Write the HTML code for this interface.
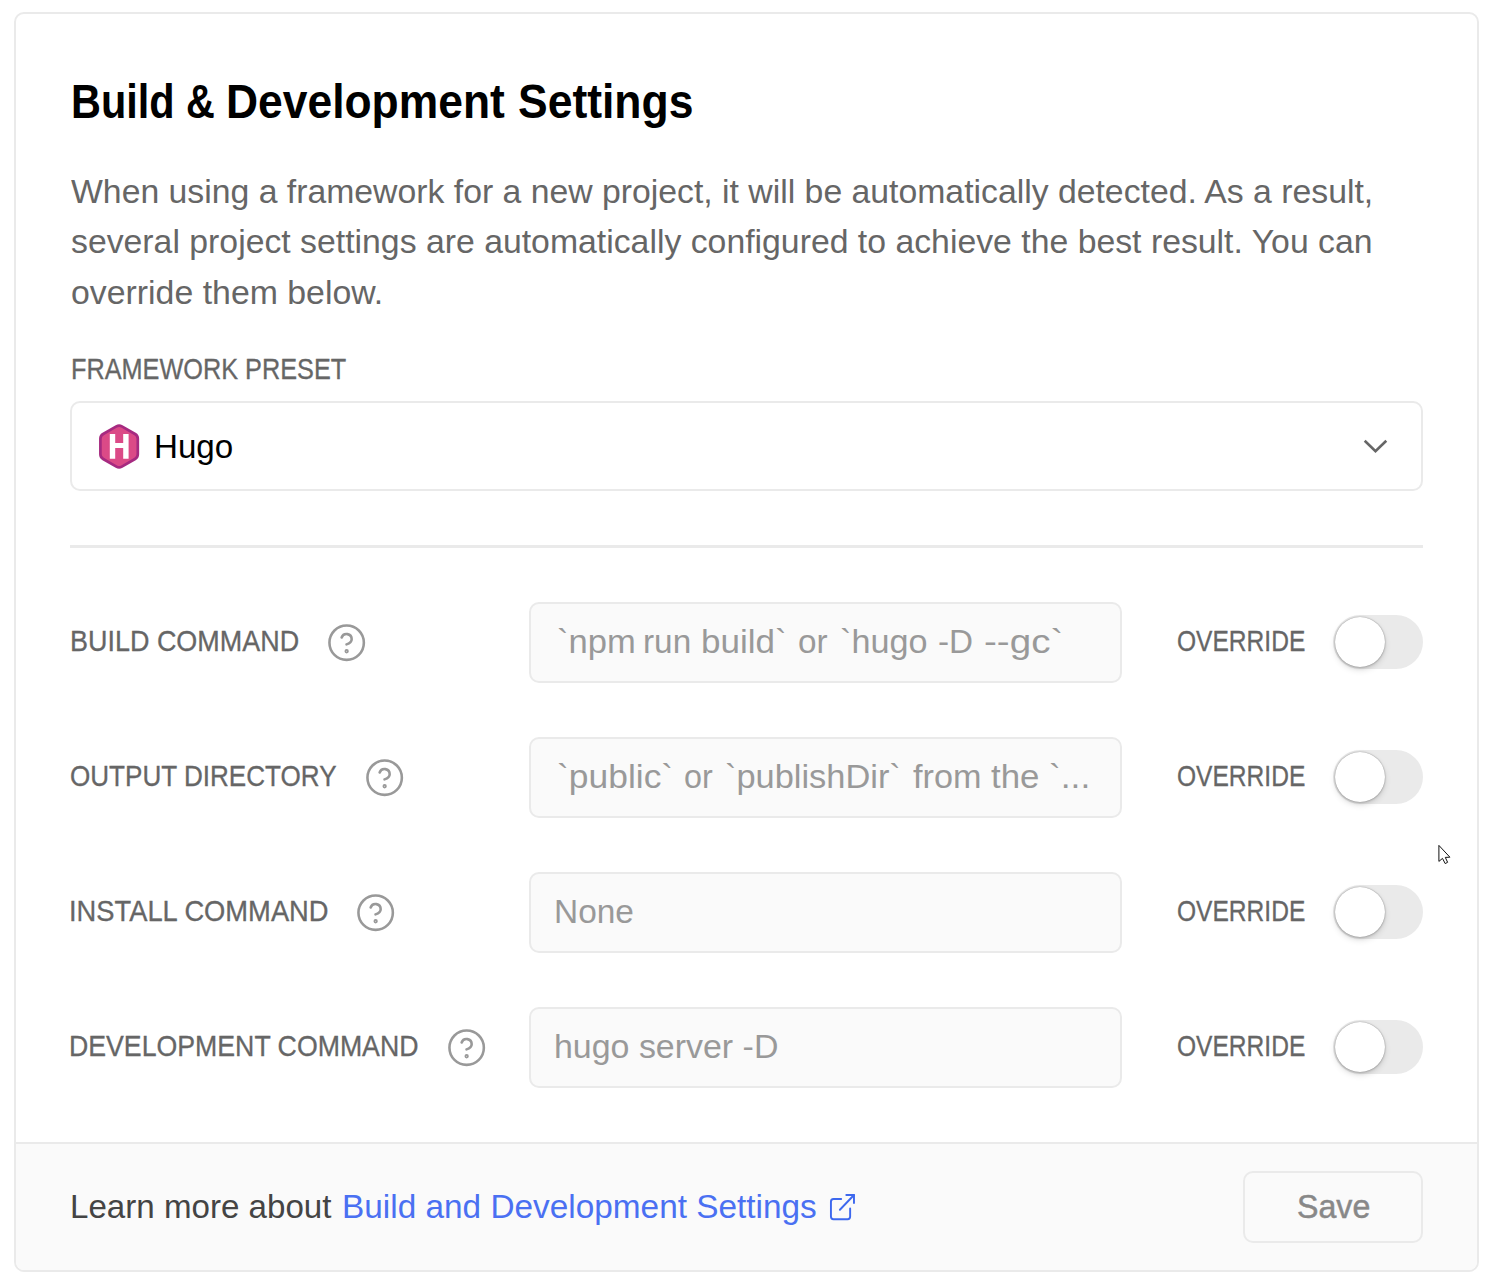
<!DOCTYPE html>
<html lang="en">
<head>
<meta charset="utf-8">
<title>Build &amp; Development Settings</title>
<style>
html,body{margin:0;padding:0;background:#fff;}
body{width:1492px;height:1279px;position:relative;overflow:hidden;font-family:"Liberation Sans",sans-serif;color:#000;}
.abs{position:absolute;overflow:visible;}
.card{position:absolute;left:14px;top:12px;width:1461px;height:1256px;border:2px solid #eaeaea;border-radius:10px;background:#fff;overflow:hidden;}
.footer{position:absolute;left:0;top:1128px;width:1461px;height:128px;border-top:2px solid #eaeaea;background:#fafafa;}
.t{position:absolute;white-space:nowrap;line-height:1;margin:0;transform-origin:0 50%;}
.select{position:absolute;left:70px;top:401px;width:1349px;height:86px;border:2px solid #eaeaea;border-radius:10px;background:#fff;}
.hr{position:absolute;left:70px;top:545px;width:1353px;height:3px;background:#eaeaea;}
.input{position:absolute;left:529px;width:589px;height:77px;border:2px solid #eaeaea;border-radius:10px;background:#fafafa;}
.track{position:absolute;left:1333px;width:90px;height:54px;border-radius:27px;background:#eaeaea;}
.knob{position:absolute;left:1334.5px;width:50.5px;height:50.5px;border-radius:50%;background:#fff;box-shadow:0 0 1.5px rgba(0,0,0,.45),0 2px 3px rgba(0,0,0,.08),0 3px 6px rgba(0,0,0,.13);}
.btn{position:absolute;left:1243px;top:1171px;width:176px;height:68px;border:2px solid #eaeaea;border-radius:10px;background:#fafafa;}
.help{position:absolute;width:41.3px;height:41.3px;fill:none;stroke:#999;stroke-width:1.5;stroke-linecap:round;stroke-linejoin:round;}
.g{margin:0;padding:0;font-size:0;line-height:0;font-weight:normal;}

</style>
</head>
<body>
<div class="card"><div class="footer"></div></div>
<div class="select"></div>
<div class="hr"></div>
<div class="input" style="top:602px"></div>
<div class="track" style="top:615px"></div><div class="knob" style="top:616.5px"></div>
<div class="input" style="top:737px"></div>
<div class="track" style="top:750px"></div><div class="knob" style="top:751.5px"></div>
<div class="input" style="top:872px"></div>
<div class="track" style="top:885px"></div><div class="knob" style="top:886.5px"></div>
<div class="input" style="top:1007px"></div>
<div class="track" style="top:1020px"></div><div class="knob" style="top:1021.5px"></div>
<div class="btn"></div>
<svg class="abs" id="icons" style="left:0;top:0" width="1492" height="1279" viewBox="0 0 1492 1279">
<path d="M116.35 426.35 A5.5 5.5 0 0 1 121.85 426.35 L135.05 434.03 A5.5 5.5 0 0 1 137.80 438.80 L137.80 454.20 A5.5 5.5 0 0 1 135.05 458.97 L121.85 466.65 A5.5 5.5 0 0 1 116.35 466.65 L103.15 458.97 A5.5 5.5 0 0 1 100.40 454.20 L100.40 438.80 A5.5 5.5 0 0 1 103.15 434.03 Z" fill="#db4a87" stroke="#a62a80" stroke-width="2.7" stroke-linejoin="round"/>
<path d="M109.8 434.1h5.4V443.0H123.19999999999999V434.1h5.4V458.7h-5.4V448.1H115.2V458.7h-5.4Z" fill="#fff"/>
<path d="M1364.7 440.7 L1375.5 451.3 L1386.3 440.7" fill="none" stroke="#666" stroke-width="2.6"/>
<g fill="none" stroke="#3d68ee" stroke-width="1.5" stroke-linecap="round" stroke-linejoin="round" transform="translate(827.1 1191) scale(1.28 1.34)"><path d="M18 13v6a2 2 0 01-2 2H5a2 2 0 01-2-2V8a2 2 0 012-2h6"/><path d="M15 3h6v6"/><path d="M10 14L21 3"/></g>
<path d="M1438.9 845.4 L1438.9 861.4 L1442.5 858.4 L1445.2 863.6 L1447.6 862.3 L1445.3 857.4 L1449.9 857.2 Z" fill="#fff" stroke="#111" stroke-width="1" stroke-linejoin="round"/>
</svg>
<svg class="help" style="left:325.80px;top:621.55px" viewBox="0 0 24 24"><circle cx="12" cy="12" r="10"/><path d="M9.09 9a3 3 0 015.83 1c0 2-3 3-3 3"/><circle cx="12" cy="17" r=".5"/></svg>
<svg class="help" style="left:364.05px;top:756.55px" viewBox="0 0 24 24"><circle cx="12" cy="12" r="10"/><path d="M9.09 9a3 3 0 015.83 1c0 2-3 3-3 3"/><circle cx="12" cy="17" r=".5"/></svg>
<svg class="help" style="left:354.75px;top:891.55px" viewBox="0 0 24 24"><circle cx="12" cy="12" r="10"/><path d="M9.09 9a3 3 0 015.83 1c0 2-3 3-3 3"/><circle cx="12" cy="17" r=".5"/></svg>
<svg class="help" style="left:445.85px;top:1026.55px" viewBox="0 0 24 24"><circle cx="12" cy="12" r="10"/><path d="M9.09 9a3 3 0 015.83 1c0 2-3 3-3 3"/><circle cx="12" cy="17" r=".5"/></svg>

<h1 class="g"><span class="t" id="t1" style="left:70.50px;top:77.79px;font-size:47.5px;color:#000;font-weight:bold;transform:scaleX(0.8730);">Build</span> <span class="t" id="t2" style="left:186.00px;top:77.79px;font-size:47.5px;color:#000;font-weight:bold;transform:scaleX(0.8411);">&amp;</span> <span class="t" id="t3" style="left:226.40px;top:77.79px;font-size:47.5px;color:#000;font-weight:bold;transform:scaleX(0.9347);">Development</span> <span class="t" id="t4" style="left:517.80px;top:77.79px;font-size:47.5px;color:#000;font-weight:bold;transform:scaleX(0.9362);">Settings</span></h1>
<p class="g"><span class="t" id="p1" style="left:71.30px;top:174.96px;font-size:33.6px;color:#666;transform:scaleX(1.0054);">When using a framework for a new project, it will be automatically detected. As a result,</span> <span class="t" id="p2" style="left:70.50px;top:224.86px;font-size:33.6px;color:#666;transform:scaleX(1.0062);">several project settings are automatically configured to achieve the best result. You can</span> <span class="t" id="p3" style="left:71.10px;top:275.96px;font-size:33.6px;color:#666;transform:scaleX(1.0078);">override them below.</span></p>
<label class="g"><span class="t" id="fp" style="left:71.00px;top:354.71px;font-size:28.7px;color:#666;transform:scaleX(0.8809);-webkit-text-stroke:0.3px #666;">FRAMEWORK PRESET</span></label>
<div class="g"><span class="t" id="hugot" style="left:154.20px;top:429.56px;font-size:33.6px;color:#000;transform:scaleX(0.9871);">Hugo</span></div>
<div class="g"><span class="t" id="ph1a" style="left:557.20px;top:624.56px;font-size:33.6px;color:#999;transform:scaleX(1.0290);">`npm</span> <span class="t" id="ph1b" style="left:643.40px;top:624.56px;font-size:33.6px;color:#999;transform:scaleX(0.9930);">run</span> <span class="t" id="ph1c" style="left:701.40px;top:624.56px;font-size:33.6px;color:#999;transform:scaleX(1.0427);">build`</span> <span class="t" id="ph1d" style="left:798.40px;top:624.56px;font-size:33.6px;color:#999;transform:scaleX(0.9916);">or</span> <span class="t" id="ph1e" style="left:840.20px;top:624.56px;font-size:33.6px;color:#999;transform:scaleX(1.0177);">`hugo</span> <span class="t" id="ph1f" style="left:937.60px;top:624.56px;font-size:33.6px;color:#999;transform:scaleX(0.9906);">-D</span> <span class="t" id="ph1g" style="left:983.80px;top:624.56px;font-size:33.6px;color:#999;transform:scaleX(1.1485);">--gc`</span></div>
<div class="g"><span class="t" id="ph2a" style="left:556.60px;top:759.56px;font-size:33.6px;color:#999;transform:scaleX(1.0548);">`public`</span> <span class="t" id="ph2b" style="left:684.40px;top:759.56px;font-size:33.6px;color:#999;transform:scaleX(0.9619);">or</span> <span class="t" id="ph2c" style="left:725.20px;top:759.56px;font-size:33.6px;color:#999;transform:scaleX(1.0240);">`publishDir`</span> <span class="t" id="ph2d" style="left:913.20px;top:759.56px;font-size:33.6px;color:#999;transform:scaleX(1.0181);">from</span> <span class="t" id="ph2e" style="left:991.20px;top:759.56px;font-size:33.6px;color:#999;transform:scaleX(1.0371);">the</span> <span class="t" id="ph2f" style="left:1048.80px;top:759.56px;font-size:33.6px;color:#999;transform:scaleX(1.0533);">`...</span></div>
<p class="g"><span class="t" id="f1" style="left:69.70px;top:1189.56px;font-size:33.6px;color:#444;transform:scaleX(0.9862);">Learn more about</span> <span class="t" id="f2" style="left:341.80px;top:1189.56px;font-size:33.6px;color:#4a70f2;transform:scaleX(0.9936);">Build and Development Settings</span></p>
<div class="g"><span class="t" id="save" style="left:1296.80px;top:1189.56px;font-size:33.6px;color:#888;transform:scaleX(0.9577);-webkit-text-stroke:0.5px #888;">Save</span></div>
<div class="g"><span class="t" id="l1" style="left:69.60px;top:626.71px;font-size:28.7px;color:#666;transform:scaleX(0.9396);-webkit-text-stroke:0.3px #666;">BUILD COMMAND</span></div>
<div class="g"><span class="t" id="o1" style="left:1177.10px;top:626.71px;font-size:28.7px;color:#666;transform:scaleX(0.8562);-webkit-text-stroke:0.3px #666;">OVERRIDE</span></div>
<div class="g"><span class="t" id="l2" style="left:70.40px;top:761.71px;font-size:28.7px;color:#666;transform:scaleX(0.9089);-webkit-text-stroke:0.3px #666;">OUTPUT DIRECTORY</span></div>
<div class="g"><span class="t" id="o2" style="left:1177.10px;top:761.71px;font-size:28.7px;color:#666;transform:scaleX(0.8562);-webkit-text-stroke:0.3px #666;">OVERRIDE</span></div>
<div class="g"><span class="t" id="l3" style="left:69.00px;top:896.71px;font-size:28.7px;color:#666;transform:scaleX(0.9523);-webkit-text-stroke:0.3px #666;">INSTALL COMMAND</span></div>
<div class="g"><span class="t" id="ph3" style="left:554.00px;top:894.56px;font-size:33.6px;color:#999;transform:scaleX(0.9957);">None</span></div>
<div class="g"><span class="t" id="o3" style="left:1177.10px;top:896.71px;font-size:28.7px;color:#666;transform:scaleX(0.8562);-webkit-text-stroke:0.3px #666;">OVERRIDE</span></div>
<div class="g"><span class="t" id="l4" style="left:69.40px;top:1031.71px;font-size:28.7px;color:#666;transform:scaleX(0.9303);-webkit-text-stroke:0.3px #666;">DEVELOPMENT COMMAND</span></div>
<div class="g"><span class="t" id="ph4" style="left:554.00px;top:1029.56px;font-size:33.6px;color:#999;transform:scaleX(1.0104);">hugo server -D</span></div>
<div class="g"><span class="t" id="o4" style="left:1177.10px;top:1031.71px;font-size:28.7px;color:#666;transform:scaleX(0.8562);-webkit-text-stroke:0.3px #666;">OVERRIDE</span></div>
</body>
</html>
